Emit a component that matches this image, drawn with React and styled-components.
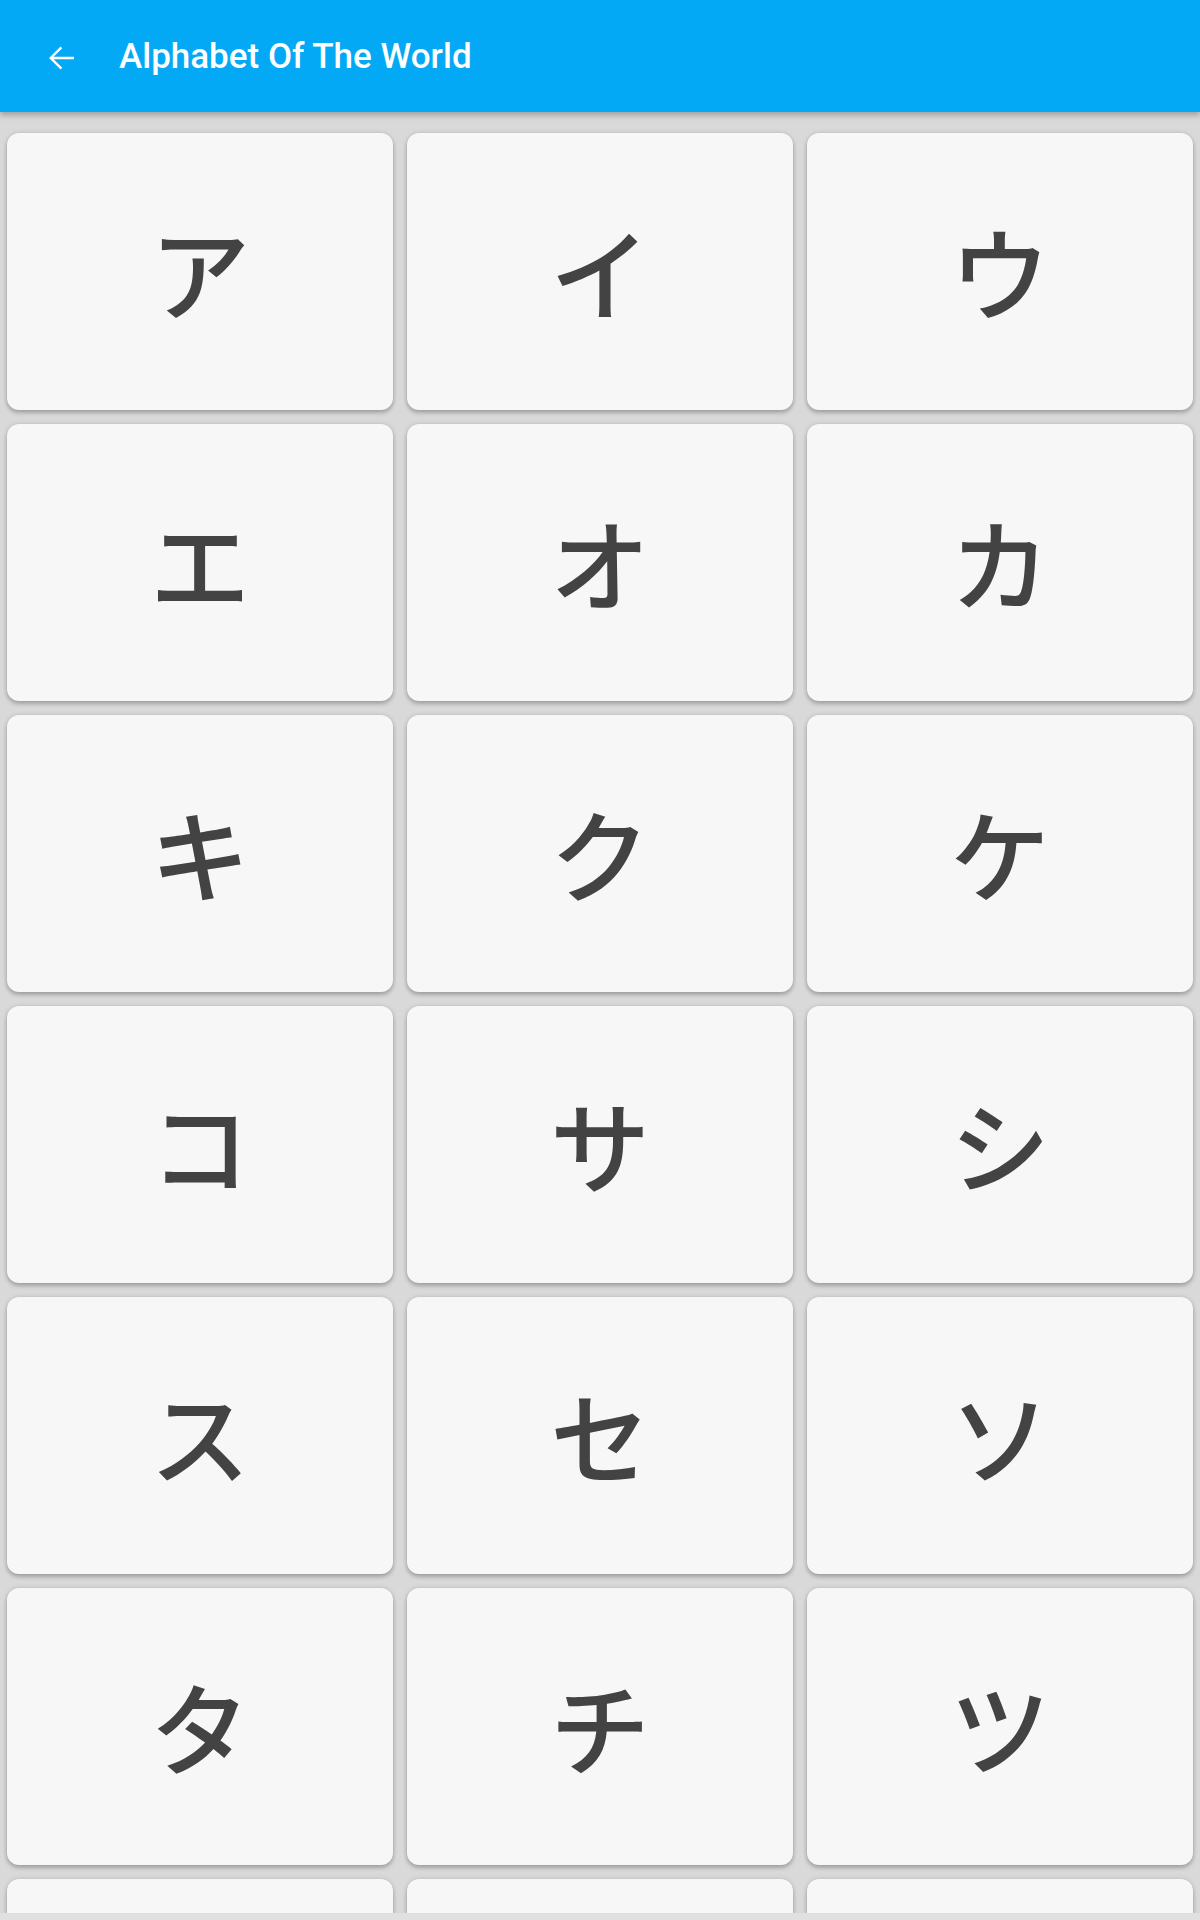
import React from 'react';
import styled, { createGlobalStyle } from 'styled-components';

const GlobalStyle = createGlobalStyle`
    html, body {
        margin: 0;
        padding: 0;
        background: #d9d9d9;
        overflow: hidden;
    }
`;

const Page = styled.div`
    width: 1200px;
    height: 1920px;
    display: flex;
    flex-direction: column;
    background: #d9d9d9;
    overflow: hidden;
`;

const AppBar = styled.header`
    flex: 0 0 112px;
    display: flex;
    align-items: center;
    background: #03a9f4;
    box-shadow: 0 3px 6px rgba(0, 0, 0, 0.28);
    position: relative;
    z-index: 2;
`;

const BackButton = styled.button`
    width: 56px;
    height: 56px;
    margin-left: 34px;
    margin-top: 4px;
    padding: 0;
    border: none;
    background: transparent;
    display: flex;
    align-items: center;
    justify-content: center;
    color: #ffffff;
`;

const Title = styled.h1`
    margin: 0 0 0 29px;
    font-family: Roboto, "Liberation Sans", sans-serif;
    font-weight: 500;
    font-size: 35px;
    color: #ffffff;
`;

const Scroller = styled.main`
    flex: 1;
    overflow: hidden;
    padding: 21px 7px 0;
`;

const Grid = styled.div`
    display: grid;
    grid-template-columns: repeat(3, 386px);
    grid-auto-rows: 277px;
    column-gap: 14px;
    row-gap: 14px;
`;

const Card = styled.div`
    background: #f7f7f7;
    border-radius: 12px;
    box-shadow: 0 3px 4px rgba(0, 0, 0, 0.22), 0 0 5px rgba(0, 0, 0, 0.12);
    display: flex;
    align-items: center;
    justify-content: center;
`;

const Letter = styled.span`
    font-family: "Noto Sans CJK JP", "Noto Sans", sans-serif;
    font-weight: 500;
    font-size: 100px;
    line-height: 1;
    color: #434343;
    transform: translateY(-2px);
`;

const BottomStrip = styled.div`
    flex: 0 0 7px;
    background: #e0e0e0;
`;

const letters = [
    'ア', 'イ', 'ウ', 'エ', 'オ', 'カ', 'キ', 'ク', 'ケ', 'コ',
    'サ', 'シ', 'ス', 'セ', 'ソ', 'タ', 'チ', 'ツ', 'テ', 'ト', 'ナ'
];

const BackArrow = () => (
    <svg width="36" height="36" viewBox="0 0 24 24" fill="none">
        <path d="M20 12H4.6M11.6 4.9L4.5 12l7.1 7.1" stroke="currentColor" strokeWidth="1.6" />
    </svg>
);

const App = () => (
    <Page>
        <GlobalStyle />
        <AppBar>
            <BackButton aria-label="Back">
                <BackArrow />
            </BackButton>
            <Title>Alphabet Of The World</Title>
        </AppBar>
        <Scroller>
            <Grid>
                {letters.map((ch) => (
                    <Card key={ch}>
                        <Letter>{ch}</Letter>
                    </Card>
                ))}
            </Grid>
        </Scroller>
        <BottomStrip />
    </Page>
);

export default App;
